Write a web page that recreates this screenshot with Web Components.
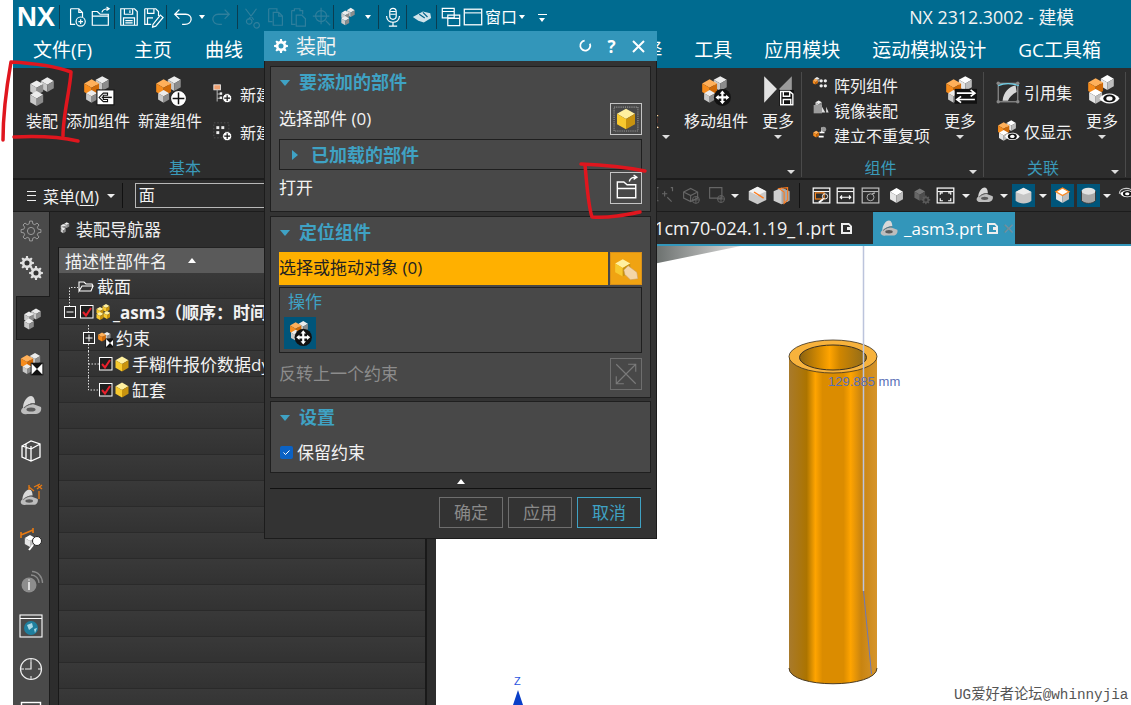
<!DOCTYPE html>
<html lang="zh">
<head>
<meta charset="utf-8">
<title>NX 2312 装配</title>
<style>
  html, body { margin: 0; height: 705px; overflow: hidden; background: #fff; }
  body { position: relative; font-family: "Open Sans", "Noto Sans CJK SC", sans-serif; color: #f2f2f2; }
</style>
</head>
<body>
<nx-app>
  <nx-titlebar></nx-titlebar>
  <nx-ribbon></nx-ribbon>
  <nx-toolbar></nx-toolbar>
  <nx-workspace>
    <nx-sidebar slot="side"></nx-sidebar>
    <nx-navigator slot="nav"></nx-navigator>
    <nx-viewport slot="view"></nx-viewport>
  </nx-workspace>
</nx-app>
<nx-dialog></nx-dialog>
<nx-marks></nx-marks>

<script>
// ---- icon drawing helpers ----
const GRAY = ['#ececec', '#c9c9c9', '#8c8c8c'];
const ORANGE = ['#ffb05a', '#f78c1c', '#cf6a08'];
const WHITE = ['#ffffff', '#e6e6e6', '#bdbdbd'];
const YELLOW = ['#fff0a0', '#f8c92e', '#c8930f'];

function iso(cx, cy, s, c) {
  const w = +(s * 0.87).toFixed(1), h = s / 2;
  return `<path fill="${c[0]}" d="M${cx} ${cy - s}L${cx + w} ${cy - h}L${cx} ${cy}L${cx - w} ${cy - h}Z"/>` +
    `<path fill="${c[1]}" d="M${cx - w} ${cy - h}L${cx} ${cy}V${cy + s}L${cx - w} ${cy + h}Z"/>` +
    `<path fill="${c[2]}" d="M${cx + w} ${cy - h}L${cx} ${cy}V${cy + s}L${cx + w} ${cy + h}Z"/>`;
}
const line = (d, c = '#fff', w = 1.3) => `<path d="${d}" fill="none" stroke="${c}" stroke-width="${w}"/>`;
const win = (c = '#fff') => `<rect x="2.5" y="3.5" width="19" height="17" fill="none" stroke="${c}" stroke-width="1.4"/>` + line('M3 7.5H21', c, 1.2);
const shape = `<path fill="#bdbdbd" d="M2 18C2 15 7 12 14 11L22 14C23 17 21 21 17 21H8C5 22 2 20 2 18Z"/><path fill="#d8d8d8" d="M4 15C4 9 8 3 12 3C15 3 16 7 16 10C11 10 7 12 4 15Z"/><path d="M5 15C8 12 12 10.500 16 10.500" stroke="#666" fill="none"/><ellipse cx="12" cy="16.500" rx="4.500" ry="2" fill="#5a5a5a"/>`;
const moveArrows = (x, y, c = '#fff') => `<g transform="translate(${x} ${y})"><circle r="8" fill="#111"/><path d="M0-6.5L2.5-3.5H1V-1H3.5V-2.5L6.5 0L3.5 2.5V1H1V3.5H2.5L0 6.5L-2.5 3.5H-1V1H-3.5V2.5L-6.5 0L-3.5-2.5V-1H-1V-3.5H-2.5Z" fill="${c}"/></g>`;
const plus = (x, y, r = 6.5) => `<circle cx="${x}" cy="${y}" r="${r}" fill="#fff" stroke="#222"/><path d="M${x - r + 2} ${y}H${x + r - 2}M${x} ${y - r + 2}V${y + r - 2}" stroke="#111" stroke-width="1.4"/>`;
const eye = (x, y, s = 1) => `<g transform="translate(${x} ${y}) scale(${s})"><path d="M-9 0C-5-6 5-6 9 0C5 6-5 6-9 0Z" fill="#fff"/><ellipse rx="5.5" ry="3.5" fill="#111"/><ellipse rx="2.8" ry="2" fill="#fff"/></g>`;
const bowtie = (x, y, s = 1) => `<g transform="translate(${x} ${y}) scale(${s})"><rect x="-7" y="-7" width="14" height="14" fill="#111"/><path d="M-6-6L0 0L-6 6ZM6-6L0 0L6 6Z" fill="#fff"/></g>`;
// toothed wheel; filled with a hole, or only outlined
function gear(x, y, ro, c = '#ddd', filled = true) {
  const ri = ro * 0.74, n = 8, pts = [];
  for (let i = 0; i < n; i++) {
    const a = i * 2 * Math.PI / n, d = Math.PI / n;
    [[ri, a - d * .62], [ro, a - d * .36], [ro, a + d * .36], [ri, a + d * .62]].forEach(([r, t]) =>
      pts.push((x + r * Math.cos(t)).toFixed(1) + ' ' + (y + r * Math.sin(t)).toFixed(1)));
  }
  const d = 'M' + pts.join('L') + 'Z';
  return filled
    ? `<path d="${d}" fill="${c}"/><circle cx="${x}" cy="${y}" r="${ro * .36}" fill="#333"/>`
    : `<path d="${d}" fill="none" stroke="${c}"/><circle cx="${x}" cy="${y}" r="${ro * .36}" fill="none" stroke="${c}"/>`;
}

const ICONS = {
  // quick access row
  newdoc: line('M5 3H14L18 7V12M14 3V7H18M5 3V20H10') + `<circle cx="16" cy="17" r="5" fill="none" stroke="#fff" stroke-width="1.3"/>` + line('M13.5 17H18.5M16 14.5V19.5'),
  open: line('M2.5 9V21H20V9H11L8 6H2.5V9ZM2.5 11H20') + line('M13 7C14 3 17 3 20 3M18 1L21 3L18 5'),
  save: line('M3 3H18L21 6V21H3ZM7 3V9H16V3M6 21V13H18V21M13 4.5V7.5M8 16H16M8 18.5H16'),
  saveas: line('M3 3H15L18 6V11M3 3V20H10M6 3V8H13V3M6 20V13H12') + line('M12 20L20 10L23 12.5L15 22L11.5 23Z'),
  undo: line('M4 9H15C23 9 23 20 14 20H11M8 4L3 9L8 14', '#fff', 1.4),
  redo: line('M20 9H9C1 9 1 20 10 20H13M16 4L21 9L16 14', '#2f7f9c', 1.4),
  cut: line('M6 3L15 15M18 3L9 15M8 19a3 3 0 1 0-.1-.1M16 19a3 3 0 1 0 .1-.1', '#2f7f9c'),
  copy: line('M4 3H13V6M4 3V17H8M9 7H15L19 11V21H9ZM15 7V11H19', '#2f7f9c'),
  paste: line('M4 5H7V3H13V5H16V9M4 5V20H8M9 10H15L19 14V22H9Z', '#2f7f9c'),
  target: `<circle cx="11" cy="11" r="6" fill="none" stroke="#2f7f9c" stroke-width="1.3"/>` + line('M11 2V20M2 11H20M16 16L21 21', '#2f7f9c'),
  asmSmall: iso(15, 7, 5, GRAY) + iso(9, 10, 5, GRAY) + iso(9, 16, 5, GRAY),
  mic: `<rect x="8.5" y="2.5" width="7" height="12" rx="3.5" fill="none" stroke="#fff" stroke-width="1.3"/>` + line('M5 11C5 20 19 20 19 11M12 17.5V21.5M7.5 22H16.5M9 6H15M9 9H15'),
  hand: `<path d="M2 12L13 6L21 8L22 13L14 18L8 16Z" fill="#cfe3ea"/>` + line('M9 9L15 13M13 7L18 12', '#00648a'),
  windows: line('M2.5 2.5H15.5V13H2.5ZM2.5 6H15.5M8.5 10H21.5V21.5H8.5ZM8.5 13.5H21.5'),
  window: win(),
  // ribbon
  asm: iso(21, 10, 7, GRAY) + iso(11, 13, 7, GRAY) + iso(11, 23, 7, GRAY),
  addComp: iso(20, 9, 7, GRAY) + iso(10, 13, 8, ORANGE) + iso(10, 21, 6, GRAY) + `<rect x="15" y="15" width="16" height="14" fill="#fff" stroke="#111"/><path d="M25 18H21L17 22L21 26H25V24H21V20H25Z" fill="#fff" stroke="#111"/>` + line('M19.5 22H29', '#111', 1.4),
  newComp: iso(20, 9, 7, GRAY) + iso(10, 13, 8, ORANGE) + iso(10, 21, 6, GRAY) + plus(24, 23, 7.5),
  moveComp: iso(20, 9, 7, GRAY) + iso(10, 13, 8, ORANGE) + iso(10, 21, 6, GRAY) + moveArrows(22, 22),
  moreMirror: `<path d="M3 2L15 14L3 27Z" fill="#e2e2e2"/><path d="M29 2L17 14L29 27Z" fill="#9a9a9a"/><rect x="17" y="15" width="14" height="15" fill="#111"/>` + line('M18.5 16.5H27L30 19V29H18.5ZM21 16.5V21H27V16.5M21 29V24H28V29'),
  moreReplace: iso(21, 9, 7, WHITE) + iso(10, 13, 8, ORANGE) + iso(10, 21, 6, GRAY) + `<rect x="11" y="14" width="21" height="14" fill="#111"/>` + line('M13 18H29M26 15L30 18L26 21M30 24H14M17 21L13 24L17 27', '#fff', 1.6),
  moreShow: iso(21, 8, 7, WHITE) + iso(10, 12, 8, ORANGE) + iso(10, 21, 7, WHITE) + eye(23, 23, 1.05),
  refset: `<rect x="3" y="4" width="18" height="17" fill="none" stroke="#888" stroke-width="1.2"/>` + line('M3 6C8 4 16 4 22 6', '#6fd0e8', 1.3) + `<path d="M7 20C8 12 13 7 19 6L20 12C16 14 13 17 12 20Z" fill="#d8d8d8"/>` + `<circle cx="3" cy="4" r="1.6" fill="#888"/><circle cx="21" cy="4" r="1.6" fill="#888"/><circle cx="3" cy="21" r="1.6" fill="#888"/><circle cx="21" cy="21" r="1.6" fill="#888"/>`,
  showOnly: iso(15, 7, 5, WHITE) + iso(8, 10, 6, ORANGE) + iso(8, 16, 5, WHITE) + eye(16, 17, .75),
  treeAdd: `<rect x="1" y="1" width="8" height="6" fill="#f0a070" stroke="#eee"/>` + line('M5 7V21M5 12H9M5 17H9', '#aaa') + `<rect x="8" y="10" width="3" height="3" fill="#eee"/><rect x="8" y="15" width="3" height="3" fill="#eee"/>` + plus(17, 17, 5.5),
  gridAdd: `<rect x="1" y="1" width="18" height="18" fill="none" stroke="#555" stroke-dasharray="2 2"/><rect x="4" y="5" width="3.5" height="3.5" fill="#eee"/><rect x="10" y="5" width="3.5" height="3.5" fill="#eee"/><rect x="4" y="11" width="3.5" height="3.5" fill="#eee"/>` + plus(17, 17, 5.5),
  pattern: iso(6, 6, 3.5, GRAY) + iso(4, 8, 3.5, ORANGE) + `<circle cx="11" cy="7" r="2" fill="#eee"/><circle cx="16" cy="7" r="2" fill="#eee"/><circle cx="11" cy="13" r="2" fill="#eee"/><circle cx="16" cy="13" r="2" fill="#eee"/>`,
  mirror: iso(8, 5, 4.5, GRAY) + `<rect x="2" y="6" width="10" height="10" fill="#9c9c9c"/><path d="M12 8L16 15H12ZM17 8V15H20Z" fill="#ddd"/>`,
  nonRepeat: iso(5, 11, 4, ORANGE) + line('M9 9H15M12 3V9M8 14H14', '#fff', 2) + `<circle cx="14" cy="5" r="3" fill="#999"/>`,
  // dialog
  yellowBox: `<rect x="1" y="1" width="22" height="22" fill="none" stroke="#9a9a9a" stroke-dasharray="1 1"/>` + iso(12, 12, 9.5, YELLOW),
  openFolder: line('M4 9V21H21V9H13L10 6.5H4ZM4 12.5H21') + line('M15 6C16 2 19 2 21 2M19 0L22 2L19 4'),
  yellowHand: iso(9, 11, 8, YELLOW) + `<path d="M10 13L14 9L22 15L23 21L16 22L11 17Z" fill="#f4d6a8" stroke="#c79a64" stroke-width=".5"/>`,
  moveSmall: iso(15, 6, 5, GRAY) + iso(8, 8, 6, ORANGE) + iso(8, 14, 5, GRAY) + moveArrows(15, 16),
  flip: line('M3 3L21 21M21 3L3 21M14 3H21V10M3 14V21H10', '#7a7a7a', 1),
  docMark: `<path d="M0 0H8L11 3V11H0ZM2 2V9H9V7H6V4H9V3.500L7.500 2Z" fill="#eee" fill-rule="evenodd"/>`,
  // toolbar right
  dimBox: line('M4 3H2V18H4M18 3H20V7M8 10H14M11 7V13', '#666') + line('M14 14l5 5', '#666'),
  dimCube: line('M3 8L11 4L19 8V15L11 19L3 15ZM3 8L11 12L19 8M11 12V19', '#666') + `<circle cx="17" cy="17" r="4" fill="none" stroke="#666"/>` + line('M13 17H21M17 13V21', '#666', 1),
  dimSquare: line('M3 3H17V15H3Z', '#666') + `<circle cx="16" cy="16" r="4" fill="none" stroke="#666"/>` + line('M12 16H20M16 12V20', '#666', 1),
  slice: `<path d="M2 7L12 2L22 7V17L12 22L2 17Z" fill="#c9c9c9"/><path d="M2 7L12 2L22 7L12 12Z" fill="#f2f2f2"/>` + line('M8 8L19 15', '#ff7a1a', 1.6),
  slice2: `<path d="M3 7L12 3L21 7V18L12 22L3 18Z" fill="#cfcfcf"/><path d="M12 3L21 7V18L12 22Z" fill="#a8a8a8"/>` + line('M9 4L19 3V17L15 21V8Z', '#ff7a1a', 1.2),
  winZoom: win() + `<rect x="5" y="9" width="10" height="7" fill="none" stroke="#ff8a20" stroke-width="1.3"/><circle cx="16" cy="13" r="3" fill="none" stroke="#fff"/>` + line('M14 16L9 20', '#fff', 2),
  winPan: win() + line('M6 14H18M8 12L6 14L8 16M16 12L18 14L16 16'),
  winRot: win('#bbb') + `<circle cx="12" cy="14" r="4" fill="none" stroke="#bbb"/>` + line('M14 10L17 9', '#bbb'),
  solid: iso(12, 12, 8.5, WHITE),
  dimGear: iso(10, 11, 7, ['#777', '#666', '#4d4d4d']) + gear(17, 17, 5, '#5a5a5a'),
  winFit: win() + line('M6 11V9H9M15 9H18V11M6 15V18H9M15 18H18V15'),
  shapeDim: `<g transform="scale(.92)">${shape}</g>`,
  solidBlue: `<path d="M3 8L12 3L21 8V18C17 22 7 22 3 18Z" fill="#c5c5c5"/><path d="M3 8L12 3L21 8L12 11Z" fill="#ededed"/>`,
  solidEdge: iso(12, 12, 8.5, WHITE) + line('M4.5 7.7L12 3.5L19.5 7.7L12 12Z', '#ff8a20', 1.4),
  cylBlue: `<path d="M4 7V18C8 22 16 22 20 18V7Z" fill="#a8a8a8"/><ellipse cx="12" cy="7" rx="8" ry="4" fill="#e2e2e2"/>` + line('M4 7V18C8 22 16 22 20 18V7', '#333', 1),
  lastEye: eye(14, 10, .9) + line('M5 10C5 2 20 2 21 9', '#ccc', 1.3),
  // sidebar
  gearDim: gear(12, 12, 10, '#9a9a9a', false),
  gears: gear(8, 7, 7, '#e0e0e0') + gear(17, 17, 7, '#e0e0e0'),
  asmTab: iso(16, 8, 5.5, GRAY) + iso(9, 11, 5.5, GRAY) + iso(9, 18, 5.5, GRAY),
  constraint: iso(16, 8, 6, GRAY) + iso(8, 11, 7, ORANGE) + iso(8, 18, 5, GRAY) + bowtie(18, 18, .9),
  shape,
  book: line('M3 8L12 3L21 6V19L12 23L3 19ZM12 8V23M3 8L12 11M7 6V21M21 6L12 11'),
  shapeOrange: `<g transform="translate(0 4) scale(.85)">${shape}</g>` + line('M10 4L15 8M15 4L21 1M20 8V16M10 2V7M18 2L23 6M23 2L18 6', '#e87a12', 1.3),
  measure: iso(11, 14, 6, WHITE) + line('M2 8L14 3M2 5V11M14 1V6', '#e87a12', 1.6) + `<circle cx="18" cy="14" r="4.5" fill="#fff" stroke="#222"/>` + line('M14 18L10 23', '#fff', 2),
  info: `<circle cx="10" cy="15" r="7.5" fill="#8d8d8d"/><path d="M10 12V20M10 9.5V10.5" stroke="#fff" stroke-width="1.4"/>` + line('M12 5C17 5 20 9 20 13M13 1.5C19 1.5 23.5 7 23.5 13', '#8a8a8a', 1.3),
  web: `<rect x="1" y="1" width="22" height="22" fill="none" stroke="#fff" stroke-width="1.1"/>` + line('M1 4.5H23', '#fff', 1) + `<circle cx="12" cy="14" r="7" fill="#1f7f9e"/><path d="M8 11L13 9L14 13L10 16ZM15 15L18 14L16 19Z" fill="#a8d8e4"/>`,
  clock: `<circle cx="12" cy="12" r="10.5" fill="none" stroke="#eee" stroke-width="1.2"/>` + line('M12 2V5M12 19V22M2 12H5M19 12H22', '#eee', 1) + line('M12 5V12H6', '#eee', 1.2),
  // tree
  folder: line('M1 12V3H6L8 5H14L15 7H4L1 12ZM1 12H13L15 7', '#fff', 1.1),
  yellowStack: iso(11, 4, 4, YELLOW) + iso(5, 7, 4, YELLOW) + iso(5, 12, 4, YELLOW) + iso(12, 11, 4, YELLOW),
  yellowCube: iso(7, 8, 7.5, YELLOW),
  constraintTree: iso(10, 6, 4, GRAY) + iso(5, 7, 4.5, ORANGE) + bowtie(13, 13, .65),
};

class NxIcon extends HTMLElement {
  connectedCallback() {
    const size = this.getAttribute('size') || 24;
    const box = this.getAttribute('box') || 24;
    this.attachShadow({ mode: 'open' }).innerHTML = `
      <style>:host { display: inline-flex; flex: none; } svg { display: block; overflow: visible; }</style>
      <svg width="${size}" height="${size}" viewBox="0 0 ${box} ${box}">${ICONS[this.getAttribute('name')] || ''}</svg>`;
  }
}
customElements.define('nx-icon', NxIcon);

class NxApp extends HTMLElement {
  constructor() {
    super();
    this.attachShadow({ mode: 'open' }).innerHTML = `
      <style>:host { display: flex; flex-direction: column; height: 705px; margin-left: 13px; background: #2d2d2d; overflow: hidden; }</style>
      <slot></slot>`;
  }
}
customElements.define('nx-app', NxApp);

class NxTitlebar extends HTMLElement {
  constructor() {
    super();
    const cell = (name, w) => `<span class="cell" style="width:${w}px"><nx-icon name="${name}" size="22"></nx-icon></span>`;
    const arrow = w => `<span class="cell" style="width:${w}px"><i class="arrow"></i></span>`;
    const sep = '<b class="sep"></b>';
    const menus = ['主页', '曲线'].map(t => `<span>${t}</span>`).join('');
    const right = ['选择', '工具', '应用模块', '运动模拟设计', 'GC工具箱'].map(t => `<span>${t}</span>`).join('');
    this.attachShadow({ mode: 'open' }).innerHTML = `
      <style>
        :host { display: block; background: #006b90; flex: none; }
        .quick { height: 34px; display: flex; align-items: center; padding-left: 4px; }
        .logo { font: 700 27.5px/32px "Liberation Sans", sans-serif; color: #fff; width: 40px; flex: none; }
        .cell { display: flex; justify-content: center; align-items: center; flex: none; }
        .arrow { display: block; border: 3.5px solid transparent; border-top: 4px solid #fff; border-bottom: 0; }
        .sep { width: 1px; height: 24px; background: #0b3d50; flex: none; }
        .win { font-size: 16px; color: #fff; width: 32px; margin-left: 4px; flex: none; padding-bottom: 2px; }
        .overflow { width: 9px; margin-left: 10px; border-top: 1.5px solid #fff; position: relative; height: 6px; }
        .overflow::after { content: ""; position: absolute; left: 1px; top: 3px; border: 3.5px solid transparent; border-top: 4px solid #fff; border-bottom: 0; }
        .title { margin-left: auto; margin-right: 57px; font-size: 17.8px; color: #f4f4f4; white-space: nowrap; padding-bottom: 2px; }
        .menu { height: 34px; box-sizing: border-box; padding-bottom: 4px; display: flex; align-items: center; font-size: 19px; gap: 33px; color: #fff; padding-right: 30px; white-space: nowrap; }
        .menu .first { margin-left: 20px; margin-right: 9px; }
        .menu .fill { flex: 1; }
        .menu .rest { display: flex; gap: 32px; }
      </style>
      <div class="quick">
        <span class="logo">NX</span>
        <b class="sep" style="margin-left:2px"></b>
        <span style="width:5px"></span>${cell('newdoc', 24)}${cell('open', 24)}
        <span style="width:1px"></span>${sep}<span style="width:2px"></span>
        ${cell('save', 24)}${cell('saveas', 24)}<span style="width:1px"></span>${sep}
        ${cell('undo', 31)}${arrow(8)}${cell('redo', 30)}<span style="width:1px"></span>${sep}
        ${cell('cut', 26)}${cell('copy', 23)}${cell('paste', 23)}${cell('target', 23)}${sep}
        ${cell('asmSmall', 28)}${arrow(12)}<span style="width:4px"></span>${sep}
        ${cell('mic', 27)}${sep}${cell('hand', 29)}${sep}
        ${cell('windows', 28)}${cell('window', 16)}
        <span class="win">窗口</span>${arrow(10)}<span class="overflow" style="margin-left:11px"></span>
        <span class="title">NX 2312.3002 - 建模</span>
      </div>
      <div class="menu"><span class="first">文件(F)</span>${menus}<span class="fill"></span><span class="rest">${right}</span></div>`;
  }
}
customElements.define('nx-titlebar', NxTitlebar);

class NxRibbonButton extends HTMLElement {
  connectedCallback() {
    const a = n => this.getAttribute(n);
    this.attachShadow({ mode: 'open' }).innerHTML = `
      <style>
        :host { display: flex; flex-direction: column; align-items: center; flex: none; width: ${a('w') || 64}px; font-size: 16px; white-space: nowrap; }
        .ic { height: 34px; margin-top: 2px; }
        .lb { height: 24px; line-height: 24px; margin-top: 1px; }
        .ar { width: 0; margin-top: 2px; border: 4px solid transparent; border-top: 4px solid #ddd; border-bottom: 0; visibility: ${a('more') !== null ? 'visible' : 'hidden'}; }
      </style>
      <div class="ic">${a('icon') ? `<nx-icon name="${a('icon')}" size="34" box="32"></nx-icon>` : ''}</div>
      <div class="lb">${a('label') || ''}</div><div class="ar"></div>`;
  }
}
customElements.define('nx-rbtn', NxRibbonButton);

class NxSmallButton extends HTMLElement {
  connectedCallback() {
    const a = n => this.getAttribute(n);
    this.attachShadow({ mode: 'open' }).innerHTML = `
      <style>:host { display: flex; align-items: center; gap: ${a('gap') || 5}px; font-size: 16px; white-space: nowrap; height: ${a('h') || 28}px; }</style>
      <nx-icon name="${a('icon')}" size="${a('size') || 20}"></nx-icon><span>${a('label')}</span>`;
  }
}
customElements.define('nx-sbtn', NxSmallButton);

class NxRibbonGroup extends HTMLElement {
  connectedCallback() {
    const a = n => this.getAttribute(n);
    this.attachShadow({ mode: 'open' }).innerHTML = `
      <style>
        :host { display: flex; flex-direction: column; flex: none; position: relative; width: ${a('w')}px; height: 105px; box-sizing: border-box; border-right: 1px solid #4a4a4a; margin-top: 4px; }
        .body { display: flex; height: 87px; overflow: hidden; }
        .cap { height: 18px; text-align: center; color: #3a9ab9; font-size: 16px; line-height: 18px; }
        .launch { position: absolute; right: 6px; bottom: 3px; border: 4px solid transparent; border-top: 4px solid #ddd; border-bottom: 0; }
      </style>
      <div class="body"><slot></slot></div>
      <div class="cap" style="padding-right:${a('capr') || 0}px">${a('cap')}</div>
      <i class="launch"></i>`;
  }
}
customElements.define('nx-rgroup', NxRibbonGroup);

class NxRibbon extends HTMLElement {
  constructor() {
    super();
    this.attachShadow({ mode: 'open' }).innerHTML = `
      <style>
        :host { display: flex; flex: none; height: 110px; background: #2d2d2d; border-bottom: 2px solid #1c1c1c; }
        .stack { display: flex; flex-direction: column; justify-content: center; }
        .fill { flex: 1; }
      </style>
      <nx-rgroup w="789" cap="基本" capr="444">
        <nx-rbtn w="58" icon="asm" label="装配" style="margin-right:-6px"></nx-rbtn>
        <nx-rbtn w="66" icon="addComp" label="添加组件"></nx-rbtn>
        <nx-rbtn w="78" icon="newComp" label="新建组件"></nx-rbtn>
        <div class="stack" style="margin-left:4px;gap:13px;padding-bottom:6px">
          <nx-sbtn icon="treeAdd" label="新建" gap="7" h="25"></nx-sbtn>
          <nx-sbtn icon="gridAdd" label="新建" gap="7" h="25"></nx-sbtn>
        </div>
        <span class="fill"></span>
        <nx-rbtn w="36" label="约束"></nx-rbtn>
        <nx-rbtn w="10" more></nx-rbtn>
        <nx-rbtn w="66" icon="moveComp" label="移动组件" style="margin:0 5px 0 12px"></nx-rbtn>
        <nx-rbtn w="48" icon="moreMirror" label="更多" more style="margin-right:-1px"></nx-rbtn>
      </nx-rgroup>
      <nx-rgroup w="182" cap="组件" capr="24">
        <div class="stack" style="margin-left:10px;padding-bottom:12px">
          <nx-sbtn icon="pattern" label="阵列组件" h="28" gap="2"></nx-sbtn>
          <nx-sbtn icon="mirror" label="镜像装配" h="28" gap="2"></nx-sbtn>
          <nx-sbtn icon="nonRepeat" label="建立不重复项" h="28" gap="2"></nx-sbtn>
        </div>
        <span class="fill"></span>
        <nx-rbtn w="44" icon="moreReplace" label="更多" more style="margin-right:1px"></nx-rbtn>
      </nx-rgroup>
      <nx-rgroup w="142" cap="关联" capr="23">
        <div class="stack" style="margin-left:11px;gap:13px;padding-bottom:8px">
          <nx-sbtn icon="refset" label="引用集" size="26" gap="3" h="26"></nx-sbtn>
          <nx-sbtn icon="showOnly" label="仅显示" size="26" gap="3" h="26"></nx-sbtn>
        </div>
        <span class="fill"></span>
        <nx-rbtn w="44" icon="moreShow" label="更多" more style="margin-right:1px"></nx-rbtn>
      </nx-rgroup>`;
  }
}
customElements.define('nx-ribbon', NxRibbon);

class NxToolbar extends HTMLElement {
  constructor() {
    super();
    // [icon, cell width, selected]; icon null = dropdown arrow
    const items = [['dimBox', 25], ['dimCube', 27], ['dimSquare', 24], [null, 12], ['slice', 32], ['slice2', 16], ['|', 20],
      ['winZoom', 24], ['winPan', 25], ['winRot', 24], ['solid', 28], ['dimGear', 22], ['winFit', 26], [null, 16],
      ['shapeDim', 22], [null, 16], ['solidBlue', 23, 1], [null, 16], ['solidEdge', 23, 1], ['cylBlue', 23, 1], [null, 14], ['lastEye', 23]];
    const html = items.map(([n, w, on], i) => {
      if (n === '|') return `<span class="cell" style="width:${w}px"><b class="sep"></b></span>`;
      if (!n) return `<span class="cell" style="width:${w}px"><i class="arrow"></i></span>`;
      return `<span class="cell ${on ? 'on' : ''}" style="width:${w}px;${i === 19 ? 'margin-left:3px' : ''}"><nx-icon name="${n}" size="21"></nx-icon></span>`;
    }).join('');
    this.attachShadow({ mode: 'open' }).innerHTML = `
      <style>
        :host { display: flex; flex: none; height: 32px; background: #2d2d2d; align-items: center; font-size: 16px; border-bottom: 1px solid #1c1c1c; box-sizing: border-box; overflow: hidden; }
        .burger { width: 9px; height: 8px; margin-left: 14px; border-top: 1px solid #eee; border-bottom: 1px solid #eee; position: relative; }
        .burger::after { content: ""; position: absolute; left: 0; right: 0; top: 3px; border-top: 1px solid #eee; }
        .menu { margin-left: 7px; } u { text-underline-offset: 2px; }
        .arrow { display: block; border: 4px solid transparent; border-top: 4px solid #eee; border-bottom: 0; }
        .sep { display: block; width: 1px; height: 25px; background: #111; }
        .search { margin-left: 12px; width: 160px; height: 25px; box-sizing: border-box; border: 1px solid #b8b8b8; padding-left: 3px; line-height: 23px; }
        .cell { display: flex; justify-content: center; align-items: center; flex: none; height: 23px; }
        .on { background: #00557a; }
        .right { display: flex; align-items: center; position: absolute; left: 653px; }
      </style>
      <span class="burger"></span><span class="menu">菜单(<u>M</u>)</span>
      <span style="margin-left:8px"><i class="arrow"></i></span>
      <b class="sep" style="margin-left:7px"></b>
      <span class="search">面</span>
      <div class="right">${html}</div>`;
  }
}
customElements.define('nx-toolbar', NxToolbar);

class NxWorkspace extends HTMLElement {
  constructor() {
    super();
    this.attachShadow({ mode: 'open' }).innerHTML = `
      <style>:host { display: flex; flex: 1; min-height: 0; overflow: hidden; }</style>
      <slot name="side"></slot><slot name="nav"></slot><slot name="view"></slot>`;
  }
}
customElements.define('nx-workspace', NxWorkspace);

class NxSidebar extends HTMLElement {
  constructor() {
    super();
    // [icon, tab height, bottom padding, active]
    const tabs = [['gearDim', 38], ['gears', 46, 10], ['asmTab', 44, 0, 1], ['constraint', 46], ['shape', 38], ['book', 52], ['shapeOrange', 38], ['measure', 50], ['info', 36], ['web', 52], ['clock', 34], ['window', 50]];
    this.attachShadow({ mode: 'open' }).innerHTML = `
      <style>
        :host { display: block; flex: none; width: 36px; background: #4a4a4a; border-right: 1px solid #1c1c1c; box-sizing: content-box; }
        .tab { display: flex; justify-content: center; align-items: center; box-sizing: border-box; }
        .on { background: #2d2d2d; margin: 0 -1px 0 3px; border: 1px solid #1c1c1c; border-right: 0; padding-right: 3px; }
      </style>
      ${tabs.map(([n, h, p, on]) => `<div class="tab ${on ? 'on' : ''}" style="height:${h}px;padding-bottom:${p || 0}px"><nx-icon name="${n}" size="24"></nx-icon></div>`).join('')}`;
  }
}
customElements.define('nx-sidebar', NxSidebar);

class NxTreeRow extends HTMLElement {
  connectedCallback() {
    const a = n => this.getAttribute(n);
    this.attachShadow({ mode: 'open' }).innerHTML = `
      <style>
        :host { display: flex; align-items: center; height: 26px; box-sizing: border-box; border-bottom: 1px solid #2a2a2a; background: linear-gradient(#393939, #323232); font-size: 17px; white-space: nowrap; }
        svg { display: block; flex: none; overflow: visible; }
        span { margin-left: 3px; ${a('bold') !== null ? 'font-weight: 700;' : ''} }
      </style>
      <slot></slot><span>${a('label') || ''}</span>`;
  }
}
customElements.define('nx-tree-row', NxTreeRow);

class NxNavigator extends HTMLElement {
  constructor() {
    super();
    const dot = d => `<path d="${d}" fill="none" stroke="#ddd" stroke-dasharray="1.5 1.5"/>`;
    const box = (x, inner) => `<rect x="${x + .5}" y="7.5" width="11" height="11" fill="#2b2b2b" stroke="#fff"/><path d="${inner}" stroke="#fff"/>`;
    const check = x => `<rect x="${x + .5}" y="6.5" width="12.5" height="12.5" fill="#1f1f1f" stroke="#fff"/><path d="M${x + 3} 13L${x + 6} 16.5L${x + 11} 9" fill="none" stroke="#e8202c" stroke-width="2"/>`;
    const at = (x, y, n) => `<g transform="translate(${x} ${y})">${ICONS[n]}</g>`;
    const rows = [
      ['', `<svg width="35" height="26">${dot('M10.5 25V14.5H19')}${at(19, 6, 'folder')}</svg>`, '截面'],
      ['bold', `<svg width="51" height="26">${dot('M10.5 0V7')}${box(5, 'M7.5 13H14.5')}${check(21)}${at(36, 5, 'yellowStack')}</svg>`, '_asm3（顺序：时间'],
      ['', `<svg width="54" height="26">${dot('M29.5 0V7M29.5 19V26')}${box(24, 'M26.5 13H33.5M30 9.5V16.5')}${at(38, 5, 'constraintTree')}</svg>`, '约束'],
      ['', `<svg width="70" height="26">${dot('M29.5 0V26M29.5 13H40')}${check(40)}${at(56, 5, 'yellowCube')}</svg>`, '手糊件报价数据dy'],
      ['', `<svg width="70" height="26">${dot('M29.5 0V13H40')}${check(40)}${at(56, 5, 'yellowCube')}</svg>`, '缸套'],
    ];
    let list = rows.map(([b, svg, t]) => `<nx-tree-row ${b} label="${t}">${svg}</nx-tree-row>`).join('');
    for (let i = 0; i < 12; i++) list += '<nx-tree-row></nx-tree-row>';
    this.attachShadow({ mode: 'open' }).innerHTML = `
      <style>
        :host { display: flex; flex-direction: column; flex: none; width: 386px; box-sizing: border-box; background: #2d2d2d; padding-left: 8px; border-right: 9px solid #2d2d2d; overflow: hidden; }
        .head { height: 35px; box-sizing: border-box; padding-bottom: 3px; display: flex; align-items: center; font-size: 17px; gap: 4px; color: #eee; }
        .table { border-left: 1px solid #191919; border-right: 2px solid #191919; flex: 1; overflow: hidden; }
        .th { height: 26px; background: #5a5a5a; display: flex; align-items: center; font-size: 17px; padding-left: 6px; border-top: 1px solid #222; box-sizing: border-box; }
        .th i { margin-left: 21px; border: 4.5px solid transparent; border-bottom: 5px solid #fff; border-top: 0; }
      </style>
      <div class="head"><nx-icon name="asmSmall" size="14"></nx-icon><span>装配导航器</span></div>
      <div class="table">
        <div class="th"><span>描述性部件名</span><i></i></div>
        ${list}
      </div>`;
  }
}
customElements.define('nx-navigator', NxNavigator);

class NxViewport extends HTMLElement {
  constructor() {
    super();
    const stops = `<stop offset="0" stop-color="#a87a2c"/><stop offset=".2" stop-color="#ac7400"/><stop offset=".3" stop-color="#ffa400"/><stop offset=".38" stop-color="#db8c00"/><stop offset=".62" stop-color="#db8c00"/><stop offset=".7" stop-color="#ffa400"/><stop offset=".82" stop-color="#c98410"/><stop offset="1" stop-color="#d6952c"/>`;
    this.attachShadow({ mode: 'open' }).innerHTML = `
      <style>
        :host { display: flex; flex-direction: column; flex: 1; min-width: 0; background: #2d2d2d; }
        .tabs { height: 34px; flex: none; box-sizing: border-box; border-bottom: 2px solid #3396ba; display: flex; justify-content: flex-end; padding-right: 116px; font-size: 18px; white-space: nowrap; }
        .doc { display: flex; align-items: center; gap: 6px; padding-right: 21px; height: 32px; }
        .cur { background: #3396ba; width: 142px; box-sizing: border-box; padding: 0 0 0 6px; gap: 5px; color: #fff; font-size: 17px; }
        svg.m { position: static; flex: none; }
        .x { color: #6f8e9b; font-size: 15px; margin-left: -1px; }
        .canvas { flex: 1; position: relative; background: #fff; min-height: 0; overflow: hidden; }
        svg { position: absolute; left: 0; top: 0; display: block; }
        text { font-family: "Liberation Sans", sans-serif; }
        .wm { font-family: "Liberation Mono", "Noto Sans CJK SC", monospace; font-size: 14.3px; fill: #555; }
      </style>
      <div class="tabs">
        <div class="doc">31cm70-024.1.19_1.prt<svg class="m" width="11" height="11">${ICONS.docMark}</svg></div>
        <div class="doc cur"><nx-icon name="shape" size="20"></nx-icon><span>_asm3.prt</span><svg class="m" width="11" height="11">${ICONS.docMark}</svg><span class="x">✕</span></div>
      </div>
      <div class="canvas">
        <svg width="696" height="459" viewBox="0 0 696 459">
          <defs>
            <linearGradient id="cyl">${stops}</linearGradient>
            <linearGradient id="bore"><stop offset="0" stop-color="#8a6210"/><stop offset=".3" stop-color="#d88c00"/><stop offset=".45" stop-color="#ffa400"/><stop offset=".6" stop-color="#d08600"/><stop offset="1" stop-color="#8d6a1c"/></linearGradient>
            <linearGradient id="wedge" x1="0" x2="1"><stop offset="0" stop-color="#555a58"/><stop offset=".72" stop-color="#6b706e"/><stop offset="1" stop-color="#dcdcdc"/></linearGradient>
          </defs>
          <path d="M0 0H305L222 17L0 64Z" fill="url(#wedge)"/>
          <path d="M353 110V422C353 443 441 443 441 422V110Z" fill="url(#cyl)"/>
          <path d="M353 422C353 443 441 443 441 422" fill="none" stroke="#4a3a20"/>
          <ellipse cx="397" cy="110.500" rx="44" ry="16.500" fill="#f7b23c" stroke="#3a3020" stroke-width=".8"/>
          <ellipse cx="397" cy="111.500" rx="33.500" ry="12.500" fill="url(#bore)" stroke="#3a3020"/>
          <path d="M427.500 0V345" fill="none" stroke="#bcc4dc" stroke-width="1.500"/>
          <path d="M427.500 345L435.500 428" fill="none" stroke="#6d78b8" stroke-width="1"/>
          <text x="392" y="140" font-size="13" fill="#5a70b8">129.885 mm</text>
          <text x="78" y="439" font-size="11" fill="#2a55e0">Z</text>
          <path d="M82 444L87 459H77Z" fill="#0a3fc8"/>
          <text class="wm" x="518" y="453">UG爱好者论坛@whinnyjia</text>
        </svg>
      </div>`;
  }
}
customElements.define('nx-viewport', NxViewport);

// ---- assembly dialog ----
class NxDlgSection extends HTMLElement {
  connectedCallback() {
    const pad = this.getAttribute('pad') || 7;
    this.attachShadow({ mode: 'open' }).innerHTML = `
      <style>
        :host { display: block; background: #484848; border: 1px solid #1f1f1f; padding: 0 8px ${pad}px; }
        .h { height: 31px; display: flex; align-items: center; gap: 9px; color: #3fa2c4; font-size: 18px; font-weight: 700; padding-left: 1px; }
        .h span { padding-bottom: 3px; }
        i { border: 5px solid transparent; border-top: 6px solid #3fa2c4; border-bottom: 0; margin-top: 0; }
      </style>
      <div class="h"><i></i><span>${this.getAttribute('heading')}</span></div><slot></slot>`;
  }
}
customElements.define('nx-dlg-section', NxDlgSection);

class NxDlgRow extends HTMLElement {
  connectedCallback() {
    const a = n => this.getAttribute(n);
    const dim = a('dim') !== null;
    this.attachShadow({ mode: 'open' }).innerHTML = `
      <style>
        :host { display: flex; align-items: center; justify-content: space-between; height: 32px; font-size: 17px; color: ${dim ? '#8c8c8c' : '#f2f2f2'}; }
        .t { padding-bottom: 3px; }
        .b { width: 32px; height: 32px; box-sizing: border-box; border: 1px solid ${dim ? '#6e6e6e' : '#c4c4c4'}; display: flex; align-items: center; justify-content: center; }
      </style>
      <span class="t">${a('label')}</span><span class="b"><nx-icon name="${a('icon')}" size="26"></nx-icon></span>`;
  }
}
customElements.define('nx-dlg-row', NxDlgRow);

class NxDialog extends HTMLElement {
  constructor() {
    super();
    this.attachShadow({ mode: 'open' }).innerHTML = `
      <style>
        :host { position: absolute; left: 264px; top: 31px; width: 393px; height: 508px; box-sizing: border-box; background: #333; border: 1px solid #1c1c1c; border-top: 0; display: flex; flex-direction: column; }
        .top { height: 30px; flex: none; margin: 0 -1px; background: #3396ba; display: flex; align-items: center; color: #f4f4f4; font-size: 20px; padding-left: 10px; }
        .top svg { display: block; flex: none; }
        .top .t { margin-left: 8px; flex: 1; padding-bottom: 2px; }
        .top .c { width: 27px; display: flex; justify-content: center; font: 700 17px "Open Sans", sans-serif; color: #fff; }
        .body { padding: 5px 5px 0; flex: 1; }
        .loaded { height: 31px; box-sizing: border-box; margin-top: 4px; border: 1px solid #1f1f1f; display: flex; align-items: center; gap: 13px; padding-left: 12px; color: #3fa2c4; font-size: 18px; font-weight: 700; }
        .loaded i { border: 5px solid transparent; border-left: 6px solid #3fa2c4; border-right: 0; }
        .loaded span { padding-bottom: 2px; }
        .select { display: flex; gap: 2px; height: 33px; margin-top: 4px; }
        .select span { flex: 1; background: #ffb000; color: #222; font-size: 17px; line-height: 31px; padding-bottom: 2px; }
        .select b { width: 32px; box-sizing: border-box; background: #f0a312; border: 1px solid #d8901a; display: flex; align-items: center; justify-content: center; }
        .ops { margin-top: 2px; height: 66px; box-sizing: border-box; border: 1px solid #1f1f1f; padding-left: 4px; display: flex; flex-direction: column; }
        .ops em { font-style: normal; color: #3fa2c4; font-size: 17px; height: 29px; line-height: 27px; padding-left: 4px; }
        .ops b { width: 32px; height: 32px; background: #00557a; display: flex; align-items: center; justify-content: center; }
        .chk { display: flex; align-items: center; height: 32px; margin-top: 3px; font-size: 17px; gap: 4px; }
        .chk span { padding-bottom: 2px; }
        .chk i { width: 13px; height: 13px; background: #0b62c4; border-radius: 2px; margin-left: 1px; display: flex; }
        .grip { height: 15px; display: flex; justify-content: center; align-items: center; }
        .grip i { border: 4.500px solid transparent; border-bottom: 5px solid #fff; border-top: 0; margin-top: 1px; }
        .rule { border-top: 1px solid #111; }
        .foot { display: flex; justify-content: flex-end; gap: 5px; padding: 8px 10px 0 0; }
        .foot button { all: unset; width: 64px; height: 31px; box-sizing: border-box; border: 1px solid #6e6e6e; text-align: center; font-size: 17px; line-height: 28px; color: #8a8a8a; }
        .foot .on { border-color: #3fa2c4; color: #3fa2c4; }
      </style>
      <div class="top">
        <svg width="14" height="14" viewBox="0 0 14 14">${gear(7, 7, 7, '#fff').replace('#333', '#3396ba')}</svg>
        <span class="t">装配</span>
        <span class="c"><svg width="14" height="14" viewBox="0 0 14 14"><path d="M4 2.500A5 5 0 1 0 10 2.500" transform="rotate(30 7 7)" fill="none" stroke="#fff" stroke-width="1.800"/></svg></span>
        <span class="c">?</span>
        <span class="c" style="margin-right:5px"><svg width="13" height="13" viewBox="0 0 13 13"><path d="M1 1L12 12M12 1L1 12" stroke="#fff" stroke-width="2"/></svg></span>
      </div>
      <div class="body">
        <nx-dlg-section heading="要添加的部件">
          <nx-dlg-row label="选择部件 (0)" icon="yellowBox" style="margin-top:5px"></nx-dlg-row>
          <div class="loaded"><i></i><span>已加载的部件</span></div>
          <nx-dlg-row label="打开" icon="openFolder" style="margin-top:2px"></nx-dlg-row>
        </nx-dlg-section>
        <nx-dlg-section heading="定位组件" style="margin-top:4px">
          <div class="select"><span>选择或拖动对象 (0)</span><b><nx-icon name="yellowHand" size="26"></nx-icon></b></div>
          <div class="ops"><em>操作</em><b><nx-icon name="moveSmall" size="26"></nx-icon></b></div>
          <nx-dlg-row dim label="反转上一个约束" icon="flip" style="margin-top:5px"></nx-dlg-row>
        </nx-dlg-section>
        <nx-dlg-section heading="设置" pad="4" style="margin-top:3px">
          <div class="chk"><i><svg width="13" height="13" viewBox="0 0 13 13"><path d="M3.500 6.500L5.500 8.500L9.500 4.500" fill="none" stroke="#fff"/></svg></i><span>保留约束</span></div>
        </nx-dlg-section>
        <div class="grip"><i></i></div>
        <div class="rule"></div>
        <div class="foot"><button>确定</button><button>应用</button><button class="on">取消</button></div>
      </div>`;
  }
}
customElements.define('nx-dialog', NxDialog);

// red pen marks drawn over the screenshot
class NxMarks extends HTMLElement {
  constructor() {
    super();
    this.attachShadow({ mode: 'open' }).innerHTML = `
      <style>:host { position: absolute; left: 0; top: 0; pointer-events: none; } svg { display: block; }</style>
      <svg width="1131" height="705" fill="none" stroke="#e0161e" stroke-width="3.500" stroke-linecap="round" stroke-linejoin="round">
        <path d="M3 140C3 115 6 90 11 62C30 63 55 66 71 72C70 90 63 115 63 136"/>
        <path d="M14 137C35 136 60 137 78 141"/>
        <path d="M581 164C605 165 625 167 645 171"/>
        <path d="M585 165C587 185 588 205 592 217C610 218 625 215 640 212"/>
      </svg>`;
  }
}
customElements.define('nx-marks', NxMarks);
</script>
</body>
</html>
